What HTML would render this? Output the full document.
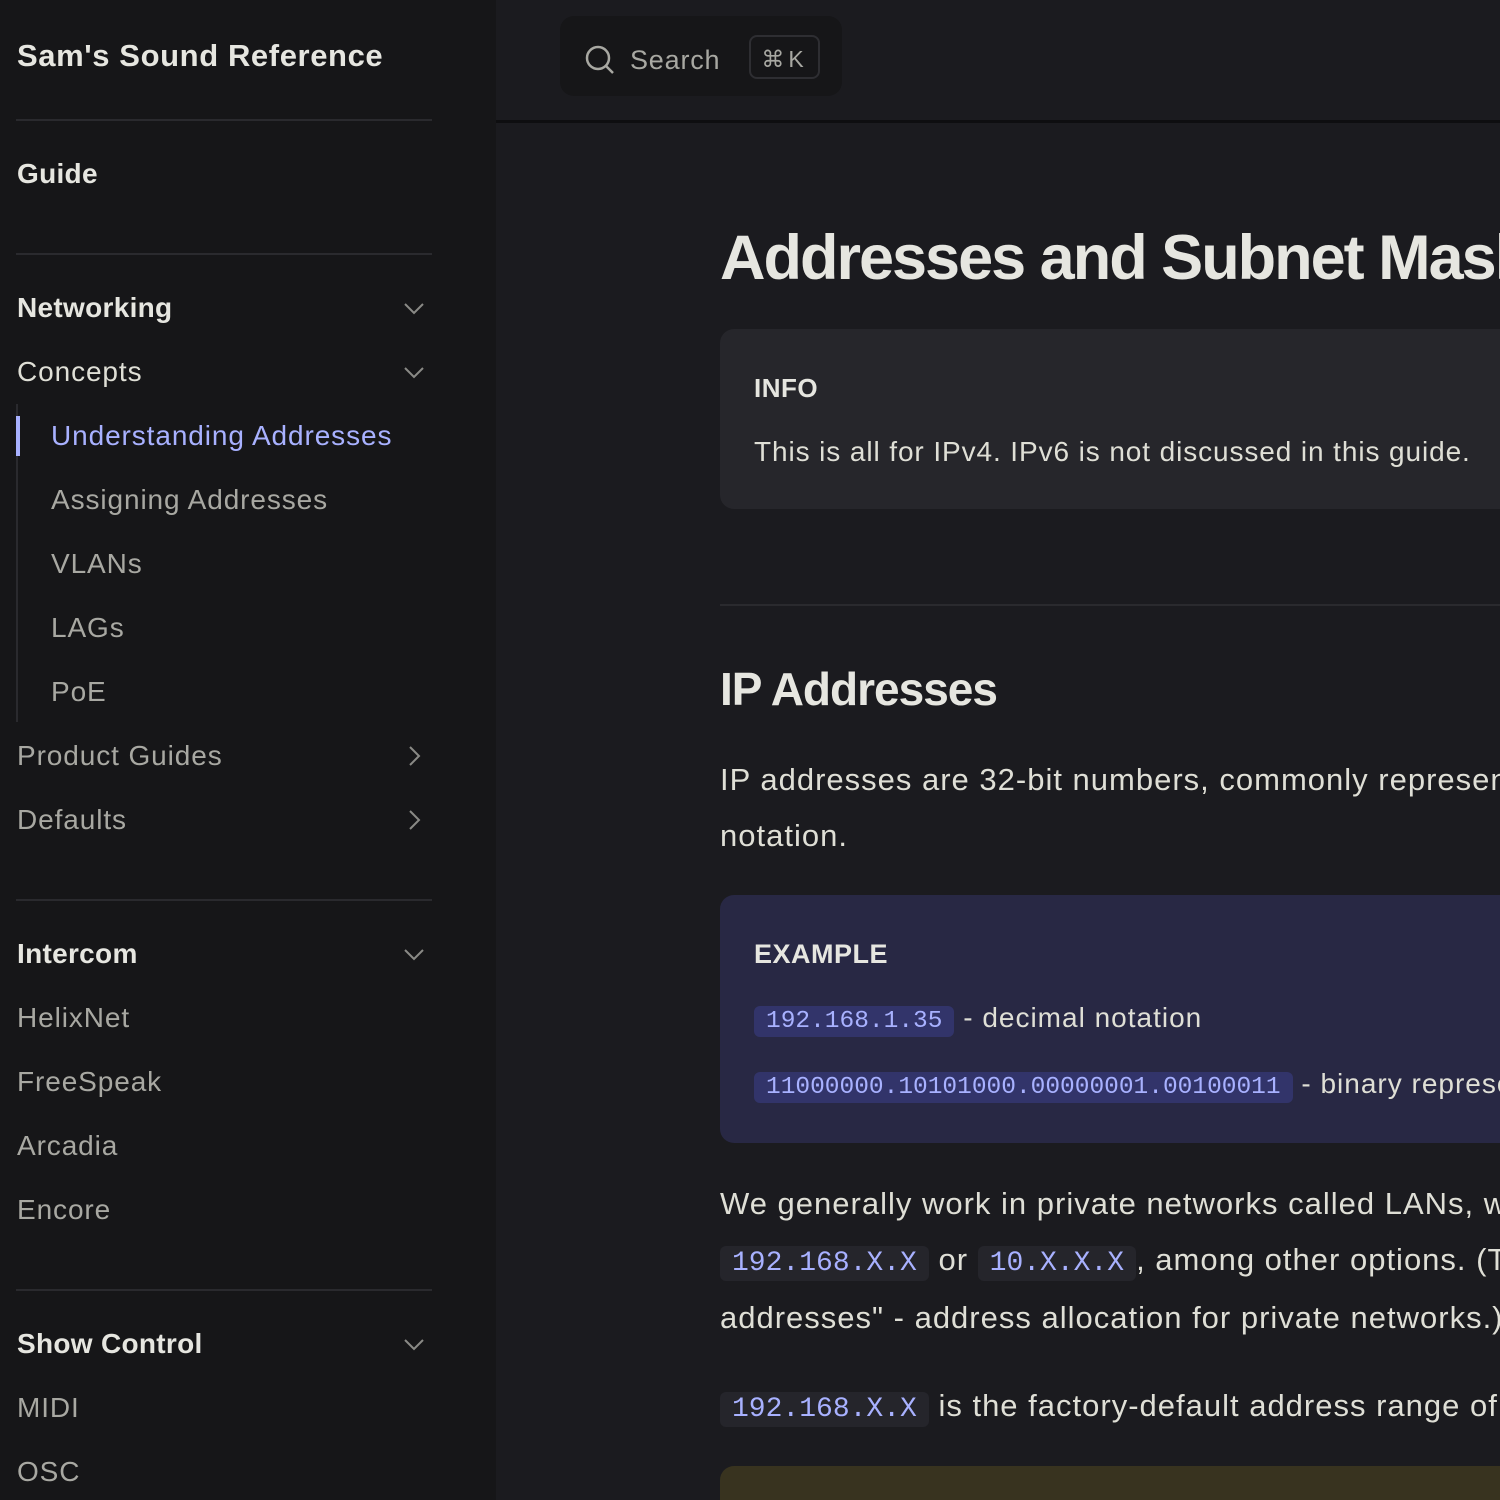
<!DOCTYPE html>
<html><head><meta charset="utf-8"><style>
*{margin:0;padding:0;box-sizing:border-box}
html,body{width:1500px;height:1500px;overflow:hidden}
body{background:#1b1b1f;font-family:"Liberation Sans",sans-serif;color:#dfdfd6;position:relative}
.wrap{position:absolute;left:0;top:0;width:1500px;height:1500px;overflow:hidden}
.sb{position:absolute;left:0;top:0;width:496px;height:1500px;background:#161618}
.a{position:absolute;white-space:nowrap;line-height:40px;height:40px}
.s{font-size:28px;color:#a8a8a2;left:17px;letter-spacing:0.9px}
.b{font-weight:bold;color:#e6e6e0;letter-spacing:0.3px}
.hr{position:absolute;left:16px;width:416px;height:2px;background:#2a2a2e}
.chev{position:absolute;left:402px;width:24px;height:24px}
.code{font-family:"Liberation Mono",monospace;color:#a8b1ff;background:#25252b;border-radius:6px;padding:2px 12px;letter-spacing:0}
.p{font-size:31px;color:#dfdfd6;letter-spacing:1px}
</style></head><body><div class="wrap">
<div class="sb"></div>
<div class="a b" style="left:17px;top:36px;font-size:31px;letter-spacing:0.6px">Sam's Sound Reference</div>
<div class="hr" style="top:119px"></div>
<div class="a s b" style="top:154px">Guide</div>
<div class="hr" style="top:253px"></div>
<div class="a s b" style="top:288px">Networking</div>
<div class="a s" style="top:352px;color:#dfdfd6">Concepts</div>
<div style="position:absolute;left:16px;top:404px;width:2px;height:318px;background:#2a2a2e"></div>
<div style="position:absolute;left:16px;top:416px;width:4px;height:40px;background:#a8b1ff"></div>
<div class="a s" style="left:51px;top:416px;color:#a8b1ff">Understanding Addresses</div>
<div class="a s" style="left:51px;top:480px">Assigning Addresses</div>
<div class="a s" style="left:51px;top:544px">VLANs</div>
<div class="a s" style="left:51px;top:608px">LAGs</div>
<div class="a s" style="left:51px;top:672px">PoE</div>
<div class="a s" style="top:736px">Product Guides</div>
<div class="a s" style="top:800px">Defaults</div>
<div class="hr" style="top:899px"></div>
<div class="a s b" style="top:934px">Intercom</div>
<div class="a s" style="top:998px">HelixNet</div>
<div class="a s" style="top:1062px">FreeSpeak</div>
<div class="a s" style="top:1126px">Arcadia</div>
<div class="a s" style="top:1190px">Encore</div>
<div class="hr" style="top:1289px"></div>
<div class="a s b" style="top:1324px">Show Control</div>
<div class="a s" style="top:1388px">MIDI</div>
<div class="a s" style="top:1452px">OSC</div>
<svg class="chev" style="top:296px" viewBox="0 0 24 24"><path d="M3 8l9 9 9-9" fill="none" stroke="#8a8a86" stroke-width="2"/></svg>
<svg class="chev" style="top:360px" viewBox="0 0 24 24"><path d="M3 8l9 9 9-9" fill="none" stroke="#8a8a86" stroke-width="2"/></svg>
<svg class="chev" style="top:744px" viewBox="0 0 24 24"><path d="M8 3l9 9-9 9" fill="none" stroke="#8a8a86" stroke-width="2"/></svg>
<svg class="chev" style="top:808px" viewBox="0 0 24 24"><path d="M8 3l9 9-9 9" fill="none" stroke="#8a8a86" stroke-width="2"/></svg>
<svg class="chev" style="top:942px" viewBox="0 0 24 24"><path d="M3 8l9 9 9-9" fill="none" stroke="#8a8a86" stroke-width="2"/></svg>
<svg class="chev" style="top:1332px" viewBox="0 0 24 24"><path d="M3 8l9 9 9-9" fill="none" stroke="#8a8a86" stroke-width="2"/></svg>

<div style="position:absolute;left:496px;top:120px;width:1004px;height:3px;background:#0e0e10"></div>
<div style="position:absolute;left:560px;top:16px;width:282px;height:80px;background:#161618;border-radius:14px"></div>
<svg style="position:absolute;left:584px;top:44px" width="32" height="32" viewBox="0 0 32 32"><circle cx="14" cy="14" r="11" fill="none" stroke="#a8a8a2" stroke-width="2.5"/><path d="M22 22l7 7" stroke="#a8a8a2" stroke-width="2.5"/></svg>
<div class="a" style="left:630px;top:40px;font-size:27px;color:#a8a8a2;letter-spacing:0.8px">Search</div>
<div style="position:absolute;left:749px;top:35px;width:71px;height:44px;border:2px solid #2e2e32;border-radius:8px;font-size:23px;color:#a8a8a2;text-align:center;line-height:44px;letter-spacing:4px">⌘K</div>

<div class="a" style="left:720px;top:222px;height:72px;line-height:72px;font-size:63px;font-weight:bold;letter-spacing:-2px;color:#e6e6e0">Addresses and Subnet Masks</div>
<div style="position:absolute;left:720px;top:329px;width:800px;height:180px;background:#26262b;border-radius:14px"></div>
<div class="a" style="left:754px;top:368px;font-size:26px;font-weight:bold;color:#e6e6e0;letter-spacing:0.5px">INFO</div>
<div class="a p" style="left:754px;top:432px;font-size:28px;letter-spacing:0.9px">This is all for IPv4. IPv6 is not discussed in this guide.</div>
<div style="position:absolute;left:720px;top:604px;width:800px;height:2px;background:#2a2a2e"></div>
<div class="a" style="left:720px;top:662px;height:54px;line-height:54px;font-size:46px;font-weight:bold;letter-spacing:-1px;color:#e6e6e0">IP Addresses</div>
<div class="a p" style="left:720px;top:760px">IP addresses are 32-bit numbers, commonly represented in dotted decimal</div>
<div class="a p" style="left:720px;top:816px">notation.</div>
<div style="position:absolute;left:720px;top:895px;width:800px;height:248px;background:#282844;border-radius:14px"></div>
<div class="a" style="left:754px;top:934px;font-size:27px;font-weight:bold;color:#e6e6e0;letter-spacing:0.5px">EXAMPLE</div>
<div class="a p" style="left:754px;top:998px;font-size:28px"><span class="code" style="background:#32346a;font-size:24.5px">192.168.1.35</span> - decimal notation</div>
<div class="a p" style="left:754px;top:1064px;font-size:28px"><span class="code" style="background:#32346a;font-size:24.5px">11000000.10101000.00000001.00100011</span> - binary representation</div>
<div class="a p" style="left:720px;top:1184px">We generally work in private networks called LANs, which use addresses like</div>
<div class="a p" style="left:720px;top:1240px"><span class="code" style="font-size:28px">192.168.X.X</span> or <span class="code" style="font-size:28px">10.X.X.X</span>, among other options. (This is "private</div>
<div class="a p" style="left:720px;top:1298px">addresses" - address allocation for private networks.)</div>
<div class="a p" style="left:720px;top:1386px"><span class="code" style="font-size:28px">192.168.X.X</span> is the factory-default address range of most devices.</div>
<div style="position:absolute;left:720px;top:1466px;width:800px;height:34px;background:#38331f;border-radius:14px 14px 0 0"></div>
</div></body></html>
